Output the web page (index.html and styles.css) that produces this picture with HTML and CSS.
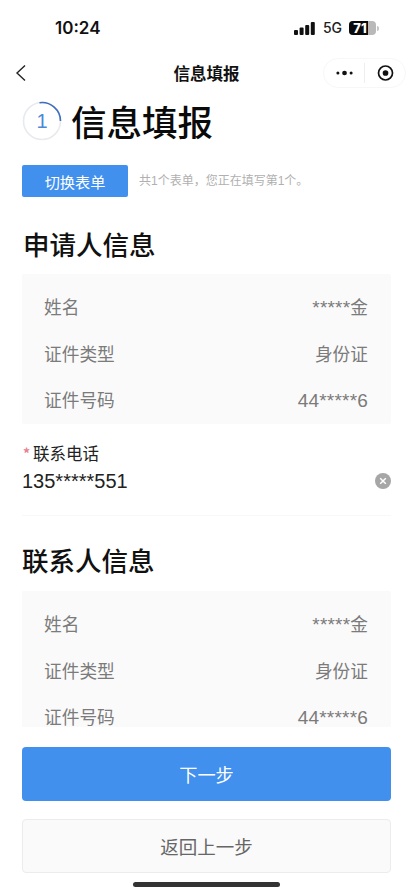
FILE: index.html
```html
<!DOCTYPE html>
<html lang="zh-CN">
<head>
<meta charset="utf-8">
<title>信息填报</title>
<link rel="stylesheet" href="styles.css">
</head>
<body>
<div class="page">
  <header class="status">
    <span class="time">10:24</span>
    <div class="status-right">
      <svg class="signal" width="21" height="13" viewBox="0 0 21 13"><rect x="0" y="8" width="4" height="5" rx="1"/><rect x="5.6" y="5.5" width="4" height="7.5" rx="1"/><rect x="11.2" y="3" width="4" height="10" rx="1"/><rect x="16.8" y="0" width="4" height="13" rx="1"/></svg>
      <span class="net">5G</span>
      <div class="battery"><div class="battery-fill"></div><span class="battery-num">71</span></div>
      <div class="battery-cap"></div>
    </div>
  </header>
  <nav class="nav">
    <svg class="back" width="12" height="18" viewBox="0 0 12 18"><path d="M10 1.5 2 9l8 7.5" fill="none" stroke="#222" stroke-width="1.4"/></svg>
    <span class="nav-title">信息填报</span>
    <div class="capsule">
      <svg class="dots" width="18" height="8" viewBox="0 0 18 8"><circle cx="2" cy="4" r="1.6"/><circle cx="9" cy="4" r="2.5"/><circle cx="16" cy="4" r="1.6"/></svg>
      <span class="capsule-line"></span>
      <svg class="target" width="18" height="18" viewBox="0 0 18 18"><circle cx="9" cy="9" r="7.4" fill="none" stroke="#111" stroke-width="1.8"/><circle cx="9" cy="9" r="3"/></svg>
    </div>
  </nav>
  <main class="scroll">
    <div class="step">
      <div class="ring">
        <svg width="40" height="40" viewBox="0 0 40 40"><circle cx="20" cy="20" r="18.5" fill="none" stroke="#e8eaee" stroke-width="1.6"/><path d="M17.5 1.7A18.5 18.5 0 0 1 38.5 20" fill="none" stroke="#3d6fc0" stroke-width="1.6"/></svg>
        <span class="ring-num">1</span>
      </div>
      <h1 class="step-title">信息填报</h1>
    </div>
    <div class="switch-row">
      <button class="switch-btn">切换表单</button>
      <span class="switch-note">共1个表单，您正在填写第1个。</span>
    </div>
    <h2 class="section-title first">申请人信息</h2>
    <section class="card">
      <div class="row"><span>姓名</span><span><span class="num">*****</span>金</span></div>
      <div class="row"><span>证件类型</span><span>身份证</span></div>
      <div class="row"><span>证件号码</span><span class="num">44*****6</span></div>
    </section>
    <div class="field">
      <div class="field-label"><span class="req">*</span>联系电话</div>
      <div class="field-value">
        <span>135*****551</span>
        <svg width="16" height="16" viewBox="0 0 16 16"><circle cx="8" cy="8" r="8" fill="#a6a6a6"/><path d="M5.2 5.2l5.6 5.6M10.8 5.2l-5.6 5.6" stroke="#fff" stroke-width="1.5"/></svg>
      </div>
    </div>
    <h2 class="section-title second">联系人信息</h2>
    <section class="card second-card">
      <div class="row"><span>姓名</span><span><span class="num">*****</span>金</span></div>
      <div class="row"><span>证件类型</span><span>身份证</span></div>
      <div class="row"><span>证件号码</span><span class="num">44*****6</span></div>
    </section>
  </main>
  <footer class="footer">
    <button class="btn primary">下一步</button>
    <button class="btn secondary">返回上一步</button>
    <div class="home"></div>
  </footer>
</div>
</body>
</html>
```
FILE: styles.css
```css
* { box-sizing: border-box; }
html, body { margin: 0; padding: 0; }
body {
  background: #fff;
  font-family: "Liberation Sans", "Noto Sans CJK SC", sans-serif;
  color: #000;
}
.page {
  width: 413px;
  height: 895px;
  display: flex;
  flex-direction: column;
  overflow: hidden;
}
.status {
  height: 56px;
  flex: none;
  display: flex;
  justify-content: space-between;
  align-items: center;
  padding: 0 34px 0 55px;
}
.time { font: 600 17px/20px Inter, sans-serif; color: #111; }
.status-right { display: flex; align-items: center; }
.signal { fill: #111; margin-right: 8px; }
.net { font: 500 14px/16px Inter, sans-serif; color: #222; margin-right: 7px; }
.battery {
  position: relative;
  width: 27px;
  height: 14px;
  border-radius: 4px;
  background: #b9b9b9;
  overflow: hidden;
}
.battery-fill { width: 19px; height: 14px; background: #0b0b0b; }
.battery-num {
  position: absolute;
  left: 0;
  right: 5px;
  top: 0;
  text-align: center;
  font: 800 13px/14px Inter, sans-serif;
  color: #fff;
}
.battery-cap { width: 2px; height: 5px; background: #c4c4c4; border-radius: 0 2px 2px 0; margin-left: 1px; }
.nav {
  height: 34px;
  flex: none;
  position: relative;
  display: flex;
  align-items: center;
  justify-content: space-between;
  padding: 0 7px 0 15px;
}
.nav-title {
  position: absolute;
  left: 0;
  right: 0;
  text-align: center;
  font: 700 16.5px/24px "Noto Sans CJK SC", sans-serif;
  color: #111;
}
.capsule {
  width: 83px;
  height: 30px;
  border: 1px solid #f7f7f7;
  border-radius: 15px;
  display: flex;
  align-items: center;
  padding: 0 11px 0 12px;
  fill: #111;
}
.capsule-line { width: 1px; height: 20px; background: #eeeeee; margin: 0 12px 0 11px; }
.scroll {
  flex: none;
  height: 637px;
  overflow: hidden;
  padding: 0 22px;
}
.step {
  display: flex;
  align-items: center;
  gap: 9px;
  height: 46px;
  margin-top: 8px;
}
.ring { position: relative; width: 40px; height: 40px; flex: none; display: flex; align-items: center; justify-content: center; }
.ring svg { position: absolute; left: 0; top: 0; }
.ring-num { font: 400 20px/20px "Liberation Sans", sans-serif; color: #4a88d8; }
.step-title {
  margin: 0;
  font: 500 35.5px/46px "Noto Sans CJK SC", sans-serif;
  color: #0a0a0a;
}
.switch-row { display: flex; align-items: center; gap: 11px; margin-top: 21px; }
.switch-btn {
  width: 106px;
  height: 32px;
  border: 0;
  border-radius: 2px;
  background: #4190ee;
  color: #fff;
  font: 400 15.2px/32px "Noto Sans CJK SC", sans-serif;
  padding: 0;
}
.switch-note { font: 400 12px/18px "Liberation Sans", "Noto Sans CJK SC", sans-serif; color: #b0b0b0; }
.section-title {
  margin: 0;
  font: 500 26.5px/36px "Noto Sans CJK SC", sans-serif;
  color: #111;
}
.section-title.first { margin-top: 29px; padding-left: 1px; }
.section-title.second { margin-top: 26px; }
.card {
  margin-top: 12px;
  background: #fafafa;
  border-radius: 2px;
  padding: 11px 23px 0 22px;
  height: 150px;
}
.second-card { margin-top: 13px; }
.row {
  display: flex;
  justify-content: space-between;
  height: 46.5px;
  align-items: center;
  font: 400 17.7px/24px "Liberation Sans", "Noto Sans CJK SC", sans-serif;
  color: #7b7b7b;
}
.num { font-size: 19px; letter-spacing: 0.2px; }
.field {
  margin-top: 18px;
  padding-bottom: 21px;
  border-bottom: 1px solid #f8f8f8;
}
.field-label { font: 400 16.5px/22px "Noto Sans CJK SC", sans-serif; color: #222; display: flex; align-items: center; }
.req { color: #e8808f; font-size: 14px; font-weight: 700; width: 11px; padding-left: 1px; }
.field-value {
  display: flex;
  justify-content: space-between;
  align-items: center;
  height: 26px;
  margin-top: 4px;
  font: 400 20px/26px "Liberation Sans", sans-serif;
  color: #222;
}
.footer {
  flex: none;
  height: 168px;
  background: #fff;
  padding: 20px 22px 0;
  display: flex;
  flex-direction: column;
  align-items: center;
}
.btn {
  width: 369px;
  height: 54px;
  flex: none;
  border-radius: 4px;
  font: 400 18.2px/24px "Noto Sans CJK SC", sans-serif;
  padding: 0;
}
.primary { background: #4190ee; color: #fff; border: 0; }
.secondary { margin-top: 18px; background: #fafafa; color: #666; border: 1px solid #ececec; font-size: 18.5px; }
.home {
  width: 147px;
  height: 5px;
  margin-top: 9px;
  border-radius: 3px;
  background: #333;
}
```
